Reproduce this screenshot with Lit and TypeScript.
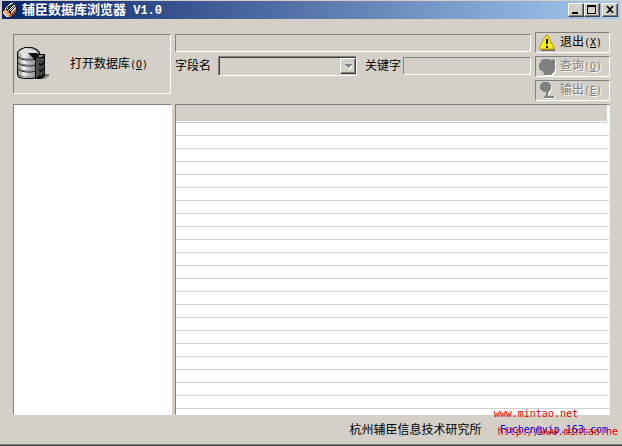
import { LitElement, html, css, svg } from "lit";
import { customElement } from "lit/decorators.js";

const ROWS = 23;

const appIcon = svg`<svg width="16" height="16" viewBox="0 0 16 16" aria-hidden="true" shape-rendering="crispEdges">
  <path d="M0 9l2-3h2l5-5h2l4 3v4l-8 7H5l-5-4z" fill="#1a1410"/>
  <path d="M1 9l2-2 6 5-2 2H5l-4-3z" fill="#e8a870"/>
  <path d="M1 10l5 4h1v1H5l-4-3z" fill="#f8dcb8"/>
  <path d="M8 12l6-6v3l-6 6H7z" fill="#b0622f"/>
  <path d="M3 6l6-5h1l1 1-6 5H3zM6 8l5-5h1l1 1-5 5H6z" fill="#fff"/>
  <path d="M8 10l5-5h1v1l-5 5z" fill="#ead8c4"/>
  <path d="M4 7l6-5M7 9l5-5" stroke="#333" fill="none"/>
</svg>`;

const databaseIcon = svg`<svg width="34" height="34" viewBox="0 0 34 34" aria-hidden="true">
  <defs>
    <linearGradient id="metal" gradientUnits="userSpaceOnUse" x1="1" y1="0" x2="21" y2="0">
      <stop offset="0" stop-color="#8a8a8a"/>
      <stop offset="0.3" stop-color="#f4f4f4"/>
      <stop offset="0.6" stop-color="#b4b4b4"/>
      <stop offset="1" stop-color="#808080"/>
    </linearGradient>
  </defs>
  <path d="M21 32l6-5h5v2l-5 3z" fill="#7c7973"/>
  <path d="M0 5l3-3 5-2h7l5 2 3 3v23l-3 3-5 1H7l-5-1-2-3z" fill="#0c0c0c"/>
  <path d="M1 5l3-2 4-2h7l4 2 3 2v23l-3 2-5 1H7l-4-1-2-2z" fill="url(#metal)"/>
  <ellipse cx="11" cy="5" rx="9" ry="3" fill="#e0e0e0"/>
  <path d="M1 10l3 2 5 1h5l5-1 3-2M1 16l3 2 5 1h5l5-1 3-2M1 22l3 2 5 1h5l5-1 3-2" fill="none" stroke="#202020" stroke-width="1"/>
  <path d="M1 9l3 2 5 1h5M1 15l3 2 5 1h5M1 21l3 2 5 1h5M1 27l3 2 5 1h5" fill="none" stroke="#777" stroke-width="1"/>
  <path d="M11 6h8l2 1h7v22l-4 3h-6V13z" fill="#0c0c0c"/>
  <path d="M19 12l3-3v20l-3 2z" fill="#4c4c4c"/>
  <path d="M22 8h5l-2 2h-3z" fill="#909090"/>
  <path d="M22 11h5v4l-3 2-2-1zM22 18l2 1 3-2v4l-3 2-2-1zM22 24l2 1 3-2v4l-3 2-2-1z" fill="#454545"/>
</svg>`;

const warningIcon = svg`<svg width="18" height="18" viewBox="0 0 18 18" aria-hidden="true">
  <path d="M9 2l7 13v2H2v-2z" fill="#77746c"/>
  <path d="M7 1h1l7 13v1H0v-1z" fill="#ffee10" stroke="#b8a400" stroke-width="1"/>
  <path d="M7 5h2v4l-1 2-1-2zM7 12h2v2H7z" fill="#000"/>
</svg>`;

const queryIcon = svg`<svg width="18" height="18" viewBox="0 0 18 18" aria-hidden="true">
  <path d="M7 2h7l2-1h1v13l-3 4H6l-2-2v-2H2V7l1-2z" fill="#fff"/>
  <path d="M2 2l3-1h5l2 1 4-1v11l-1 2-3 3H5l-1-3-3-2-1-2V6l2-2z" fill="#808080"/>
</svg>`;

const exportIcon = svg`<svg width="18" height="18" viewBox="0 0 18 18" aria-hidden="true">
  <path d="M12 3l1 3-1 4-2 2v2h6v3H7l-1-1z" fill="#fff"/>
  <path d="M4 0h5l3 3v4l-2 3-1 1v3h6v2H6l-1-1 2-2v-3H5L1 7V3z" fill="#808080"/>
</svg>`;

@customElement("app-root")
export class AppRoot extends LitElement {
  static styles = css`
    :host {
      display: block;
      font: 12px/16px "Liberation Sans", "Noto Sans CJK SC", sans-serif;
      color: #000;
    }
    * { box-sizing: border-box; }
    button, input, select { font: inherit; color: inherit; margin: 0; border-radius: 0; outline: none; }
    .window {
      display: flex;
      flex-direction: column;
      height: 100vh;
      background: #d4d0c8;
      border-bottom: 1px solid #404040;
      box-shadow: inset 0 -1px #808080;
    }
    .titlebar {
      display: flex;
      align-items: center;
      height: 18px;
      margin: 1px 2px 0;
      padding: 0 2px 0 0;
      background: linear-gradient(to right, #0a246a, #a6caf0);
      color: #fff;
    }
    .title {
      flex: 1;
      margin: 0 0 0 4px;
      font-size: 13px;
      line-height: 18px;
      font-weight: bold;
      white-space: pre;
    }
    .version { font: bold 12px/18px "Liberation Mono", monospace; }
    .caption {
      width: 16px;
      height: 14px;
      padding: 0;
      background: #d4d0c8;
      border: 1px solid;
      border-color: #fff #404040 #404040 #fff;
      box-shadow: inset -1px -1px #808080;
      display: flex;
    }
    .close { margin-left: 2px; }
    .main {
      flex: 1;
      min-height: 0;
      display: flex;
      flex-direction: column;
      padding: 13px 12px 0 13px;
    }
    .tools { display: flex; height: 72px; gap: 4px; }
    .sunken {
      background: #d4d0c8;
      border: 1px solid;
      border-color: #808080 #fff #fff #808080;
    }
    .open {
      width: 158px;
      height: 60px;
      margin-top: 2px;
      padding: 0 0 0 3px;
      display: flex;
      align-items: center;
      gap: 19px;
    }
    .mono { font: 10px/16px "DejaVu Sans Mono", monospace; }
    .fields { flex: 1; min-width: 0; padding-top: 2px; }
    .path { display: block; width: 100%; height: 18px; }
    .filter { display: flex; align-items: center; height: 20px; margin-top: 4px; }
    .combo {
      appearance: none;
      width: 139px;
      height: 20px;
      opacity: 1;
      border: 1px solid;
      border-color: #808080 #fff #fff #808080;
      box-shadow: inset 1px 1px #404040;
      background: #d4d0c8;
    }
    .combo-wrap { display: grid; align-items: center; justify-items: end; margin: 0 8px 0 7px; }
    .combo-wrap > * { grid-area: 1 / 1; }
    .arrow {
      width: 16px;
      height: 16px;
      margin-right: 1px;
      border: 1px solid;
      border-color: #fff #404040 #404040 #fff;
      box-shadow: inset -1px -1px #808080;
      pointer-events: none;
      z-index: 1;
    }
    .keyword { flex: 1; min-width: 0; height: 18px; margin-left: 2px; }
    .actions { display: flex; flex-direction: column; gap: 3px; }
    .action {
      width: 75px;
      height: 21px;
      padding: 0 0 0 3px;
      display: flex;
      align-items: center;
      gap: 3px;
    }
    .action:disabled { color: #808080; text-shadow: 1px 1px #fff; }
    .action svg, .open svg { flex: none; }
    .label { white-space: nowrap; }
    .panes { flex: 1; min-height: 0; display: flex; gap: 3px; }
    .pane {
      background: #fff;
      border: 1px solid;
      border-color: #808080 #fff #fff #808080;
      overflow: hidden;
    }
    .tables { width: 159px; }
    .records { flex: 1; min-width: 0; }
    .grid { width: 100%; border-collapse: separate; border-spacing: 0; table-layout: fixed; }
    .grid th { height: 18px; padding: 0; background: #d4d0c8; border-right: 2px solid #fff; border-bottom: 1px solid #d4d0c8; box-shadow: inset 0 -1px #fff; }
    .grid td { height: 13px; padding: 0; border-bottom: 1px solid #d0d0d0; }
    .footer { position: relative; display: flex; justify-content: flex-end; align-items: center; height: 30px; padding-right: 14px; gap: 18px; }
    .mail { color: #0000e0; text-decoration: none; }
    .mark { position: absolute; color: #e00000; text-decoration: none; white-space: nowrap; }
    .site { right: 44px; top: -9px; }
    .link { right: 4px; top: 9px; }
  `;

  render() {
    return html`
      <div class="window">
        <header class="titlebar">
          ${appIcon}
          <h1 class="title">辅臣数据库浏览器<span class="version"> V1.0</span></h1>
          <button class="caption" aria-label="最小化"><svg width="14" height="12"><path d="M3 8h6v2H3z"/></svg></button>
          <button class="caption" aria-label="最大化"><svg width="14" height="12"><path d="M2 1h9v9H2zM3 3v6h7V3z" fill-rule="evenodd"/></svg></button>
          <button class="caption close" aria-label="关闭"><svg width="14" height="12"><path d="M3 2h2l2 2 2-2h2L8 5.500 11 9H9L7 7 5 9H3l3-3.500z"/></svg></button>
        </header>
        <main class="main">
          <div class="tools">
            <button class="open sunken">${databaseIcon}<span class="label">打开数据库<span class="mono">(<u>O</u>)</span></span></button>
            <div class="fields">
              <input class="path sunken" aria-label="数据库" readonly />
              <div class="filter">
                <label for="field">字段名</label>
                <div class="combo-wrap">
                  <select class="combo" id="field" disabled></select>
                  <svg class="arrow" viewBox="0 0 14 14" aria-hidden="true" shape-rendering="crispEdges"><path d="M5 7h7l-4 4z" fill="#fff"/><path d="M3 5h8L7 9z" fill="#808080"/></svg>
                </div>
                <label for="keyword">关键字</label>
                <input class="keyword sunken" id="keyword" disabled />
              </div>
            </div>
            <div class="actions">
              <button class="action sunken">${warningIcon}<span class="label">退出<span class="mono">(<u>X</u>)</span></span></button>
              <button class="action sunken" disabled>${queryIcon}<span class="label">查询<span class="mono">(<u>Q</u>)</span></span></button>
              <button class="action sunken" disabled>${exportIcon}<span class="label">输出<span class="mono">(<u>E</u>)</span></span></button>
            </div>
          </div>
          <div class="panes">
            <div class="pane tables"></div>
            <div class="pane records">
              <table class="grid">
                <thead><tr><th></th></tr></thead>
                <tbody>${Array.from({ length: ROWS }, () => html`<tr><td></td></tr>`)}</tbody>
              </table>
            </div>
          </div>
        </main>
        <footer class="footer">
          <span>杭州辅臣信息技术研究所</span>
          <a class="mail mono" href="mailto:Fuchen@vip.163.com">Fuchen@vip.163.com</a>
          <a class="mark site mono" href="http://www.mintao.net">www.mintao.net</a>
          <a class="mark link mono" href="http://www.mintao.net">http://www.mintao.ne</a>
        </footer>
      </div>
    `;
  }
}
